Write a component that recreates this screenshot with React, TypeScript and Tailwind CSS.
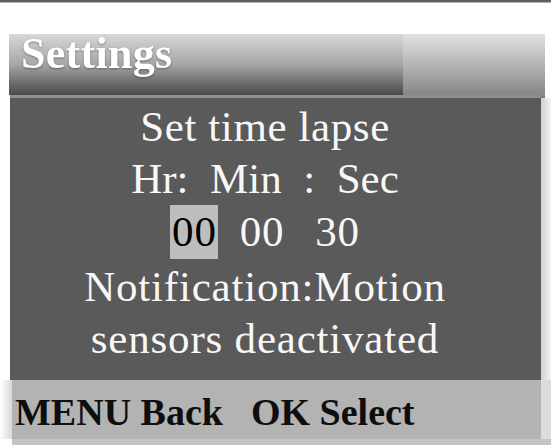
import React from 'react';

const serif = { fontFamily: '"Liberation Serif", "Times New Roman", serif' };

export default function App() {
  return (
    <div className="w-[551px] h-[445px] bg-white flex flex-col overflow-hidden" style={serif}>
      {/* top edge */}
      <div className="h-[2px] bg-[#5e5e5e]" />
      <div className="h-[1px] bg-[#b5b5b5]" />
      <div className="h-[31px]" />

      {/* title bar */}
      <div className="ml-[9px] w-[536px] h-[61px] flex">
        <div className="w-[394px] h-full bg-gradient-to-b from-[#d8d8d8] via-[#a6a6a6] to-[#4a4a4a] pl-[12px]">
          <h1 className="text-[44px] font-bold leading-[40px] tracking-[0.3px] text-white drop-shadow-[0_1px_1px_rgba(0,0,0,0.35)]">
            Settings
          </h1>
        </div>
        <div className="flex-1 h-[64px] bg-gradient-to-b from-[#e2e2e2] via-[#b4b4b4] to-[#858585] border-b-2 border-[#7a7a7a]" />
      </div>

      {/* separator */}
      <div className="ml-[10px] w-[531px] h-[3px] bg-[#8e8e8e]" />

      {/* main panel */}
      <div className="flex">
        <div className="ml-[10px] w-[531px] h-[282px] bg-[#5a5a5a] pt-[3px] pr-[21px] text-center text-[43px] leading-[52px] tracking-[0.8px] text-[#f7f7f7]">
          <div className="tracking-[0.6px]">Set time lapse</div>
          <div className="whitespace-pre tracking-normal">Hr:  Min  :  Sec</div>
          <div className="flex justify-center items-baseline">
            <span className="inline-block bg-[#bdbdbd] text-black pl-[2px] pr-[1px] py-[1px]">00</span>
            <span className="ml-[22px]">00</span>
            <span className="ml-[31px]">30</span>
          </div>
          <div className="pt-[2px]">Notification:Motion</div>
          <div>sensors deactivated</div>
        </div>
        <div className="flex-1 bg-gradient-to-r from-[#d0d0d0] to-[#f4f4f4]" />
      </div>

      {/* bottom bar */}
      <div className="flex">
        <div className="w-[12px] bg-gradient-to-r from-white to-[#d8d8d8]" />
        <div className="w-[529px] h-[59px] bg-[#b3b3b3] flex items-center pl-[3px] pt-[6px] text-[38px] font-bold text-[#0e0e0e] whitespace-pre">
          <span>MENU Back</span>
          <span className="ml-[28px]">OK Select</span>
        </div>
        <div className="flex-1 bg-[#dcdcdc]" />
      </div>
      <div className="flex-1 ml-[12px] bg-[#c4c4c4]" />
    </div>
  );
}
